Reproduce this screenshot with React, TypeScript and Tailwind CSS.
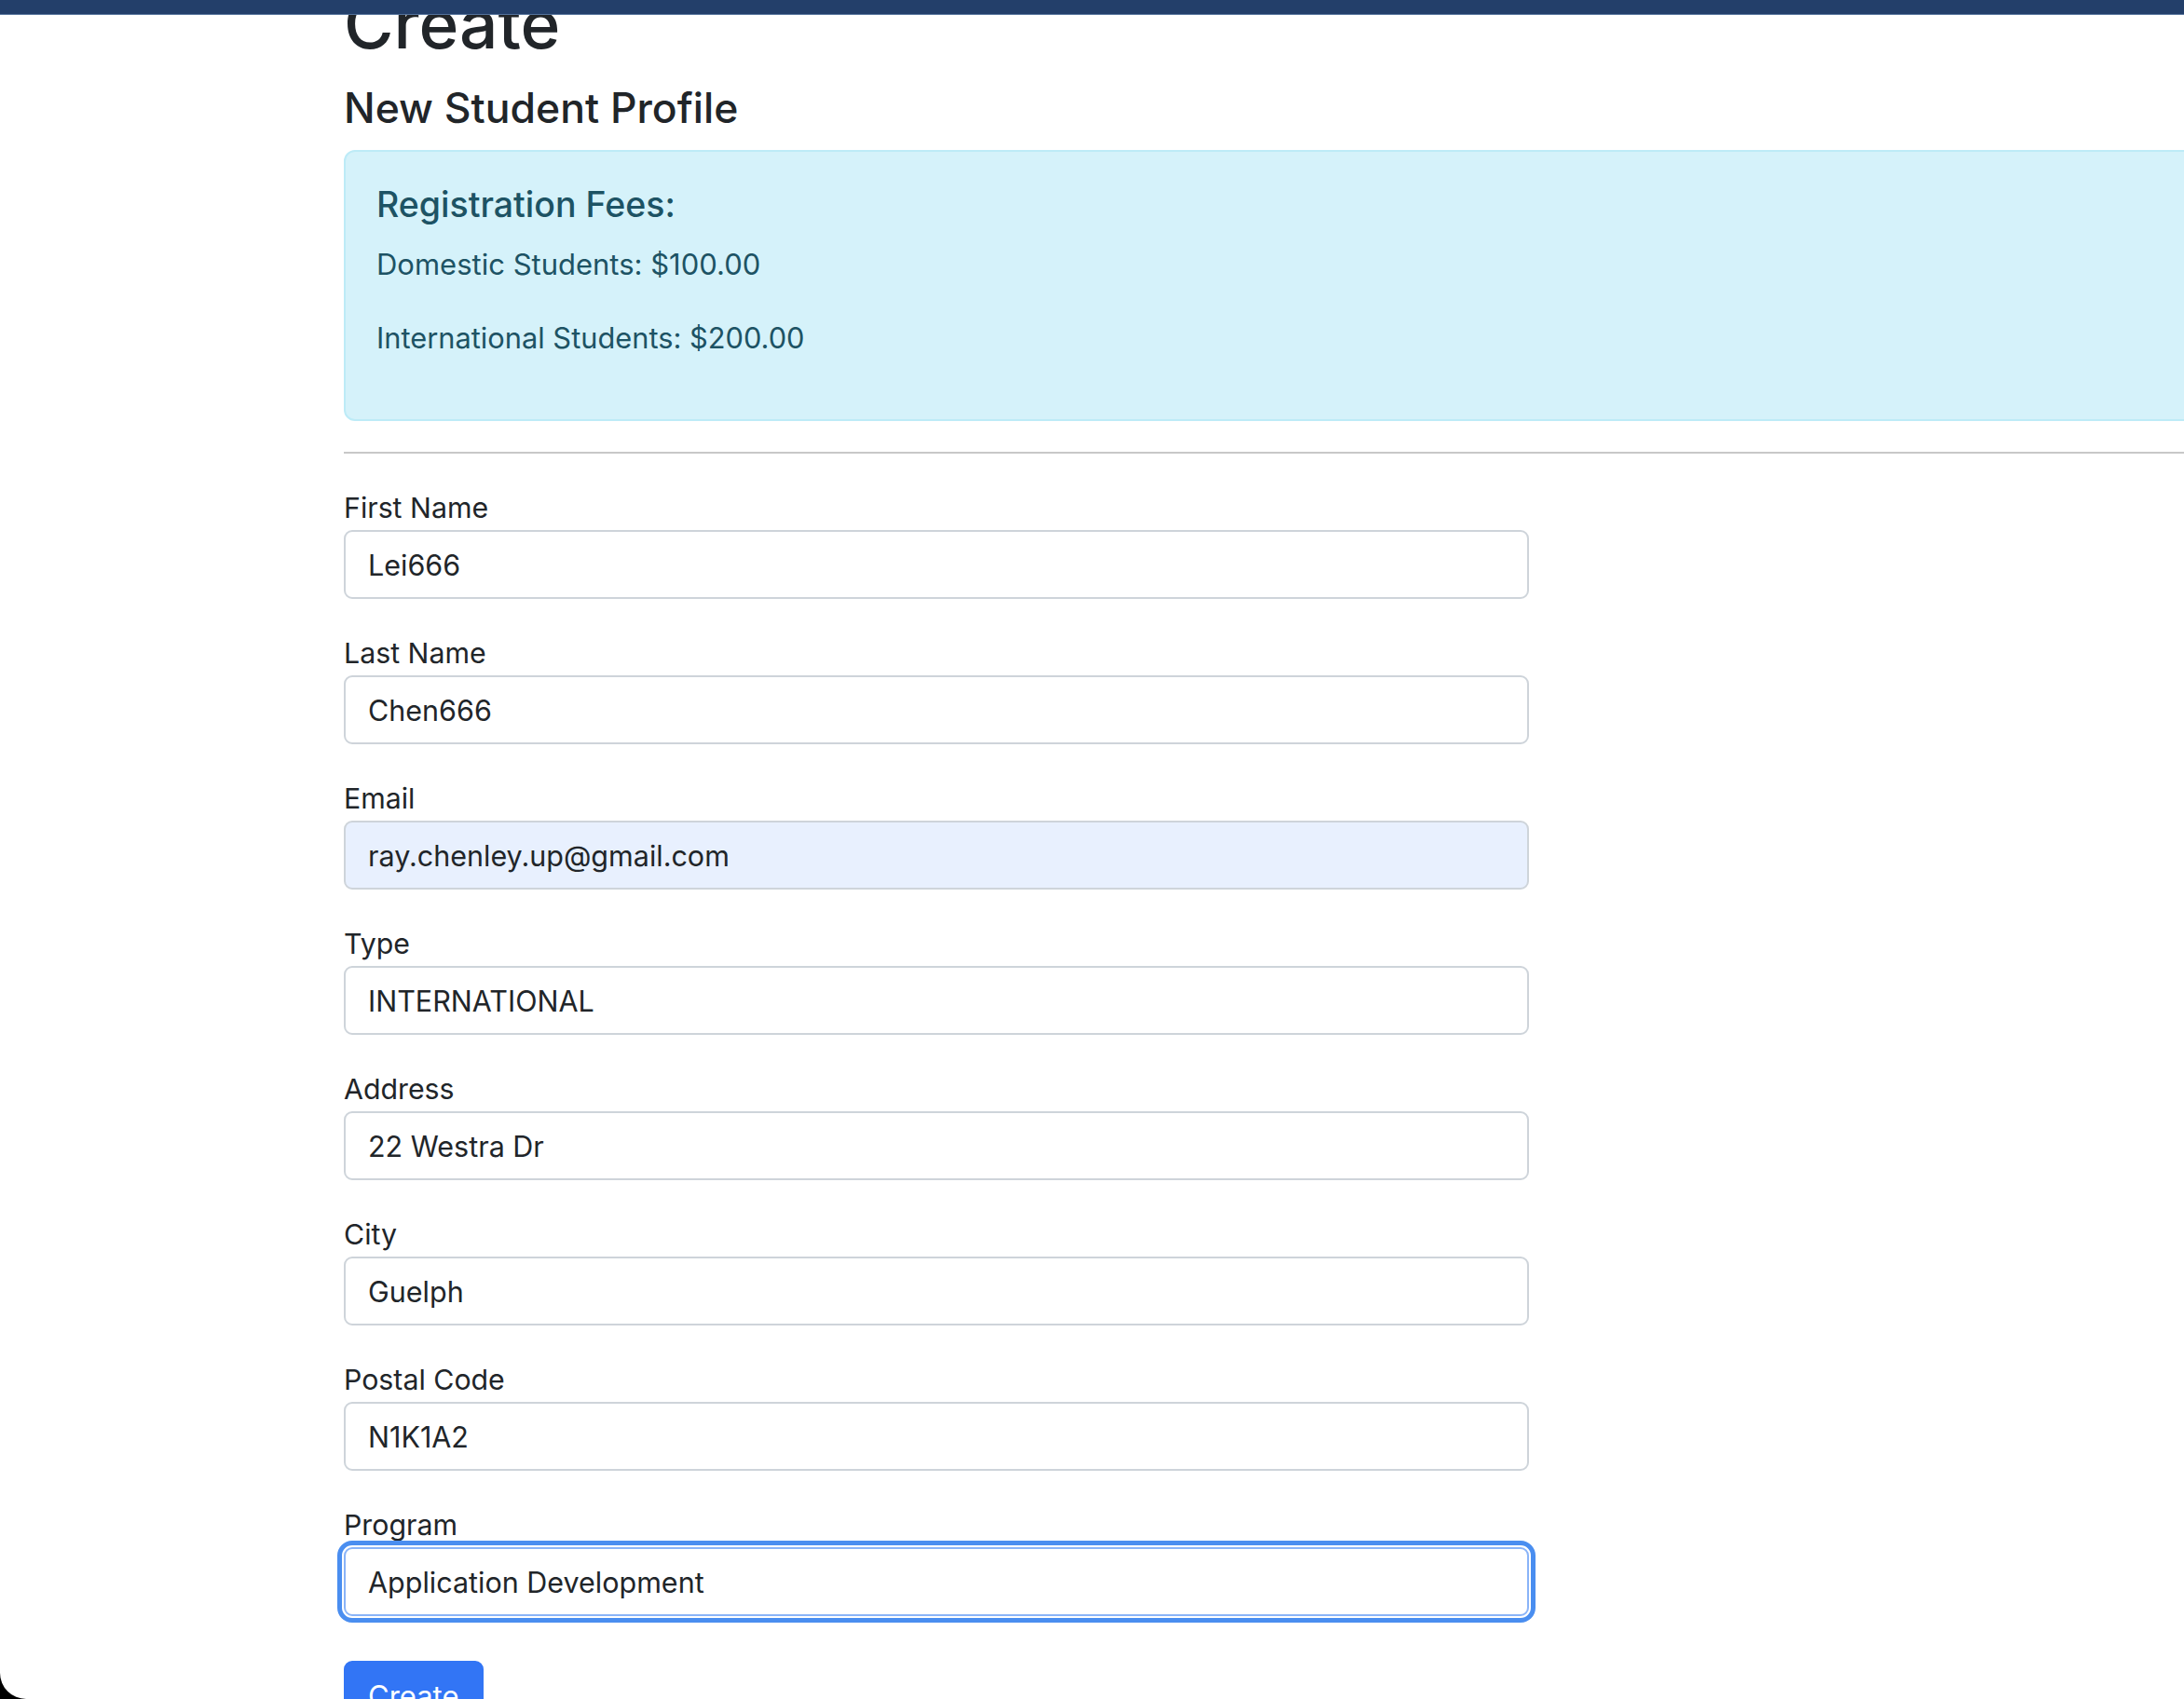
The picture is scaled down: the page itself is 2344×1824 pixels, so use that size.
import { useState } from "react";

type Field = {
  id: string;
  label: string;
  value: string;
  autofilled?: boolean;
  focused?: boolean;
};

const FIELDS: Field[] = [
  { id: "firstName", label: "First Name", value: "Lei666" },
  { id: "lastName", label: "Last Name", value: "Chen666" },
  { id: "email", label: "Email", value: "ray.chenley.up@gmail.com", autofilled: true },
  { id: "type", label: "Type", value: "INTERNATIONAL" },
  { id: "address", label: "Address", value: "22 Westra Dr" },
  { id: "city", label: "City", value: "Guelph" },
  { id: "postalCode", label: "Postal Code", value: "N1K1A2" },
  { id: "program", label: "Program", value: "Application Development", focused: true },
];

function FormGroup({
  field,
  value,
  onChange,
}: {
  field: Field;
  value: string;
  onChange: (v: string) => void;
}) {
  const base =
    "block w-full h-[74px] rounded-[9px] border-2 px-[24px] text-[30.5px] text-[#212529] outline-none";
  const state = field.focused
    ? "bg-white border-[#8ab4f8] outline-[5px] outline-solid outline-[#4a8ef0] outline-offset-[2px]"
    : field.autofilled
      ? "bg-[#e8f0fe] border-[#ced4da]"
      : "bg-white border-[#ced4da]";
  return (
    <div className="mb-[34px]">
      <label htmlFor={field.id} className="block text-[30.3px] leading-[48px] text-[#212529]">
        {field.label}
      </label>
      <input
        id={field.id}
        value={value}
        onChange={(e) => onChange(e.target.value)}
        className={`${base} ${state}`}
      />
    </div>
  );
}

export default function App() {
  const [values, setValues] = useState<Record<string, string>>(() =>
    Object.fromEntries(FIELDS.map((f) => [f.id, f.value])),
  );

  return (
    <div className="h-screen w-full overflow-hidden bg-black font-['Inter',sans-serif]">
      <div className="h-[1824px] overflow-hidden rounded-bl-[28px] bg-white">
        {/* sticky nav strip, only its bottom edge is in view */}
        <div className="relative z-10 h-[16px] border-b border-[#54729b] bg-[#233f6a]" />

        <div className="pl-[369px]">
          <div className="w-[2500px]">
            <h1 className="-mt-[26px] text-[73px] leading-[72px] font-medium text-[#212529]">
              Create
            </h1>
            <h3 className="mt-[27px] text-[44.5px] leading-[54px] font-medium text-[#212529]">
              New Student Profile
            </h3>

            <div className="mt-[18px] rounded-[12px] border-2 border-[#bdebf7] bg-[#d5f2fa] px-[33px] pt-[34px] pb-[32px] text-[#1d5364]">
              <h4 className="mb-[17px] text-[37.5px] leading-[46px] font-medium">Registration Fees:</h4>
              <p className="mb-[32px] text-[31px] leading-[47px]">Domestic Students: $100.00</p>
              <p className="mb-[32px] text-[30.8px] leading-[47px]">International Students: $200.00</p>
            </div>

            <hr className="mt-[33px] h-[2px] border-0 bg-[#c8c8c8]" />
          </div>

          <form className="mt-[34px] w-[1272px]" onSubmit={(e) => e.preventDefault()}>
            {FIELDS.map((f) => (
              <FormGroup
                key={f.id}
                field={f}
                value={values[f.id]}
                onChange={(v) => setValues((prev) => ({ ...prev, [f.id]: v }))}
              />
            ))}
            <button
              type="submit"
              className="mt-[14px] rounded-[9px] border-2 border-[#3275f5] bg-[#3275f5] px-[24px] py-[12px] text-[31px] leading-[47px] text-white"
            >
              Create
            </button>
          </form>
        </div>
      </div>
    </div>
  );
}
